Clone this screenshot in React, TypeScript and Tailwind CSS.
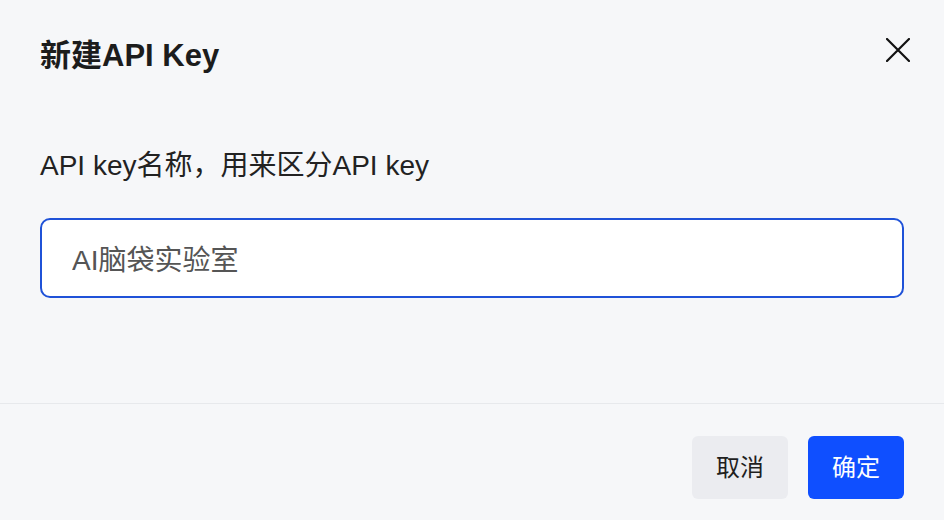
import { useState } from "react";

export default function App() {
  const [name, setName] = useState("AI脑袋实验室");

  return (
    <div className="flex h-[520px] w-[944px] flex-col overflow-hidden bg-[#f6f7f9] font-['Liberation_Sans','Noto_Sans_CJK_SC',sans-serif] text-[#1f1f1f]">
      {/* Header */}
      <div className="flex items-start justify-between pl-10 pr-[34px] pt-[38px]">
        <h1 className="text-[31px] font-bold leading-[36px] text-[#1c1c1c]">新建API Key</h1>
        <button className="flex h-6 w-6 items-center justify-center text-[#111]" aria-label="close">
          <svg width="24" height="24" viewBox="0 0 24 24" fill="none" stroke="currentColor" strokeWidth="2.2" strokeLinecap="round">
            <path d="M1 1 L23 23 M23 1 L1 23" />
          </svg>
        </button>
      </div>

      {/* Body */}
      <div className="flex flex-1 flex-col px-10 pt-[76px]">
        <label className="text-[28px] leading-[32px] text-[#222]">API key名称，用来区分API key</label>
        <input
          autoFocus
          value={name}
          onChange={(e) => setName(e.target.value)}
          className="mt-[36px] h-[80px] w-full rounded-[10px] border-2 border-[#1f52d8] bg-white px-[30px] text-[28px] text-[#555] caret-[#333] outline-none"
        />
      </div>

      {/* Footer */}
      <div className="flex h-[117px] items-start justify-end gap-5 border-t border-[#e7e9ec] pr-10 pt-[32px]">
        <button className="h-[63px] w-[96px] rounded-[6px] bg-[#ebecf0] text-[24px] text-[#1f1f1f]">取消</button>
        <button className="h-[63px] w-[96px] rounded-[6px] bg-[#0f4fff] text-[24px] text-white">确定</button>
      </div>
    </div>
  );
}
